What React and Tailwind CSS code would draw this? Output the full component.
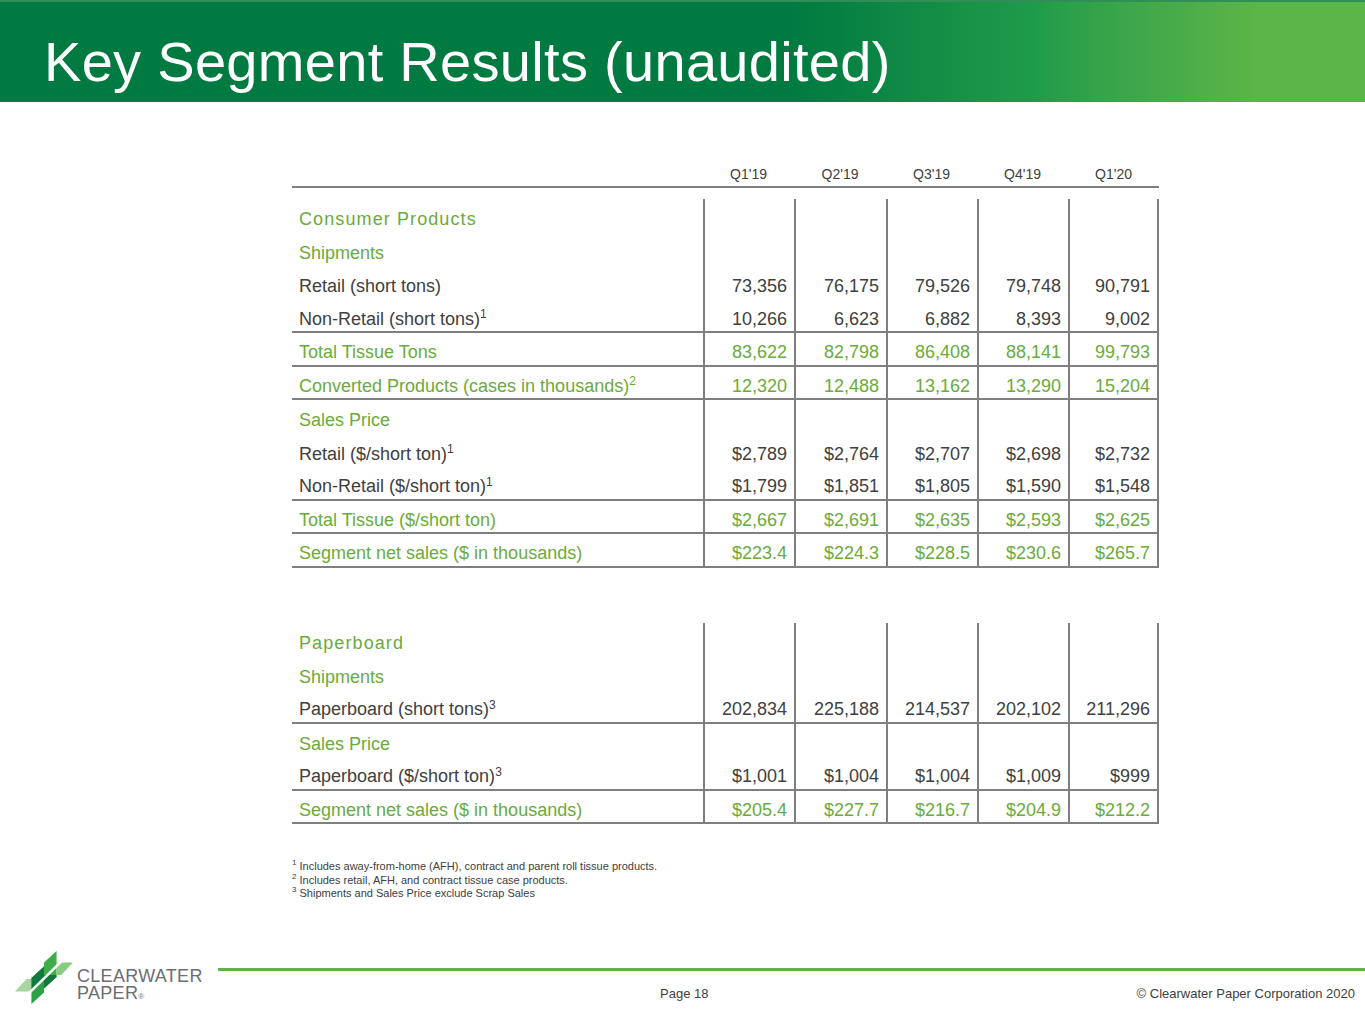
import React from 'react';

const GRAY = 'text-[#404040]';
const GREEN = 'text-[#6aab3c]';

const consumerRows = [
  { label: 'Consumer Products', green: true, title: true },
  { label: 'Shipments', green: true },
  { label: 'Retail (short tons)', values: ['73,356', '76,175', '79,526', '79,748', '90,791'] },
  { label: 'Non-Retail (short tons)', sup: '1', values: ['10,266', '6,623', '6,882', '8,393', '9,002'], line: true },
  { label: 'Total Tissue Tons', green: true, values: ['83,622', '82,798', '86,408', '88,141', '99,793'], line: true },
  { label: 'Converted Products (cases in thousands)', sup: '2', green: true, values: ['12,320', '12,488', '13,162', '13,290', '15,204'], line: true },
  { label: 'Sales Price', green: true },
  { label: 'Retail ($/short ton)', sup: '1', values: ['$2,789', '$2,764', '$2,707', '$2,698', '$2,732'] },
  { label: 'Non-Retail ($/short ton)', sup: '1', values: ['$1,799', '$1,851', '$1,805', '$1,590', '$1,548'], line: true },
  { label: 'Total Tissue ($/short ton)', green: true, values: ['$2,667', '$2,691', '$2,635', '$2,593', '$2,625'], line: true },
  { label: 'Segment net sales ($ in thousands)', green: true, values: ['$223.4', '$224.3', '$228.5', '$230.6', '$265.7'], line: true },
];

const paperboardRows = [
  { label: 'Paperboard', green: true, title: true },
  { label: 'Shipments', green: true },
  { label: 'Paperboard (short tons)', sup: '3', values: ['202,834', '225,188', '214,537', '202,102', '211,296'], line: true },
  { label: 'Sales Price', green: true },
  { label: 'Paperboard ($/short ton)', sup: '3', values: ['$1,001', '$1,004', '$1,004', '$1,009', '$999'], line: true },
  { label: 'Segment net sales ($ in thousands)', green: true, values: ['$205.4', '$227.7', '$216.7', '$204.9', '$212.2'], line: true },
];

const quarters = ["Q1'19", "Q2'19", "Q3'19", "Q4'19", "Q1'20"];
const colWidths = ['w-[91px]', 'w-[92px]', 'w-[91px]', 'w-[91px]', 'w-[91px]'];

function Row({ row }) {
  const color = row.green ? GREEN : GRAY;
  return (
    <div className={`flex h-[33.5px] ${row.line ? 'border-b-2 border-[#7f7f7f]' : ''}`}>
      <div className={`w-[411px] flex items-center pl-[7px] pt-[8px] text-[18px] ${color} ${row.title ? 'tracking-[1.1px]' : ''}`}>
        <span>
          {row.label}
          {row.sup && <sup className="text-[12px] -top-[0.55em]">{row.sup}</sup>}
        </span>
      </div>
      {colWidths.map((w, i) => (
        <div
          key={i}
          className={`${w} flex items-center justify-end pr-[7px] pt-[8px] text-[18px] border-l-2 border-[#7f7f7f] ${color} ${i === 4 ? 'border-r-2' : ''}`}
        >
          {row.values ? row.values[i] : ''}
        </div>
      ))}
    </div>
  );
}

function Logo() {
  return (
    <svg width="58" height="54" viewBox="0 0 60 56">
      <polygon points="30,13 43,1 43,28 30,40" fill="#3fae4a" />
      <polygon points="43,13 60,13 48,26 43,26" fill="#8ccb82" />
      <polygon points="30,26 43,26 43,28 30,40" fill="#11793b" />
      <polygon points="17,29 30,17 30,44 17,56" fill="#2f9f48" />
      <polygon points="0,43 12,30 17,30 17,43" fill="#a9d69f" />
      <polygon points="17,29 30,17 30,30 17,43" fill="#0f7a3c" />
      <line x1="6" y1="53" x2="56" y2="4" stroke="#ffffff" strokeWidth="2.6" />
    </svg>
  );
}

export default function App() {
  return (
    <div className="w-[1365px] h-[1024px] bg-white flex flex-col font-['Liberation_Sans',Arial,sans-serif] overflow-hidden">
      <header className="h-[102px] shrink-0 bg-linear-to-r from-[#007a40] from-58% via-[#1f9c4a] via-76% to-[#5bb548] to-92% border-t-2 border-[#2f8f57]">
        <h1 className="pl-[44px] pt-[32px] text-[56px] leading-none text-white tracking-[0.3px]">
          Key Segment Results (unaudited)
        </h1>
      </header>

      <main className="pl-[292px]">
        <div className="w-[867px] mt-[60px] flex h-[26px] border-b-2 border-[#7f7f7f]">
          <div className="w-[411px]" />
          {quarters.map((q, i) => (
            <div key={q} className={`${colWidths[i]} flex items-center justify-center text-[14px] ${GRAY}`}>
              {q}
            </div>
          ))}
        </div>

        <div className="w-[867px] mt-[11px]">
          {consumerRows.map((r) => (
            <Row key={r.label} row={r} />
          ))}
        </div>

        <div className="w-[867px] mt-[55.5px]">
          {paperboardRows.map((r) => (
            <Row key={r.label} row={r} />
          ))}
        </div>

        <div className={`mt-[36px] text-[11px] leading-[13.5px] ${GRAY}`}>
          <p><sup className="text-[8px] -top-[0.6em]">1</sup> Includes away-from-home (AFH), contract and parent roll tissue products.</p>
          <p><sup className="text-[8px] -top-[0.6em]">2</sup> Includes retail, AFH, and contract tissue case products.</p>
          <p><sup className="text-[8px] -top-[0.6em]">3</sup> Shipments and Sales Price exclude Scrap Sales</p>
        </div>
      </main>

      <footer className="mt-auto h-[79px] flex">
        <div className="w-[218px] shrink-0 flex items-start pl-[15px] pt-[5px]">
          <Logo />
          <div className="ml-[4px] mt-[18px] flex flex-col text-[#6d6e71] text-[18px] leading-[17px] tracking-[0.3px]">
            <span className="leading-[17px]">CLEARWATER</span>
            <span className="leading-[17px]">
              PAPER<span className="text-[8px]">®</span>
            </span>
          </div>
        </div>
        <div className="flex-1 flex flex-col pt-[23px]">
          <div className="h-[3px] bg-[#5db446]" />
          <div className={`mt-[15px] flex text-[13px] leading-[16px] ${GRAY}`}>
            <span className="ml-[442px]">Page 18</span>
            <span className="ml-auto pr-[10px]">© Clearwater Paper Corporation 2020</span>
          </div>
        </div>
      </footer>
    </div>
  );
}
